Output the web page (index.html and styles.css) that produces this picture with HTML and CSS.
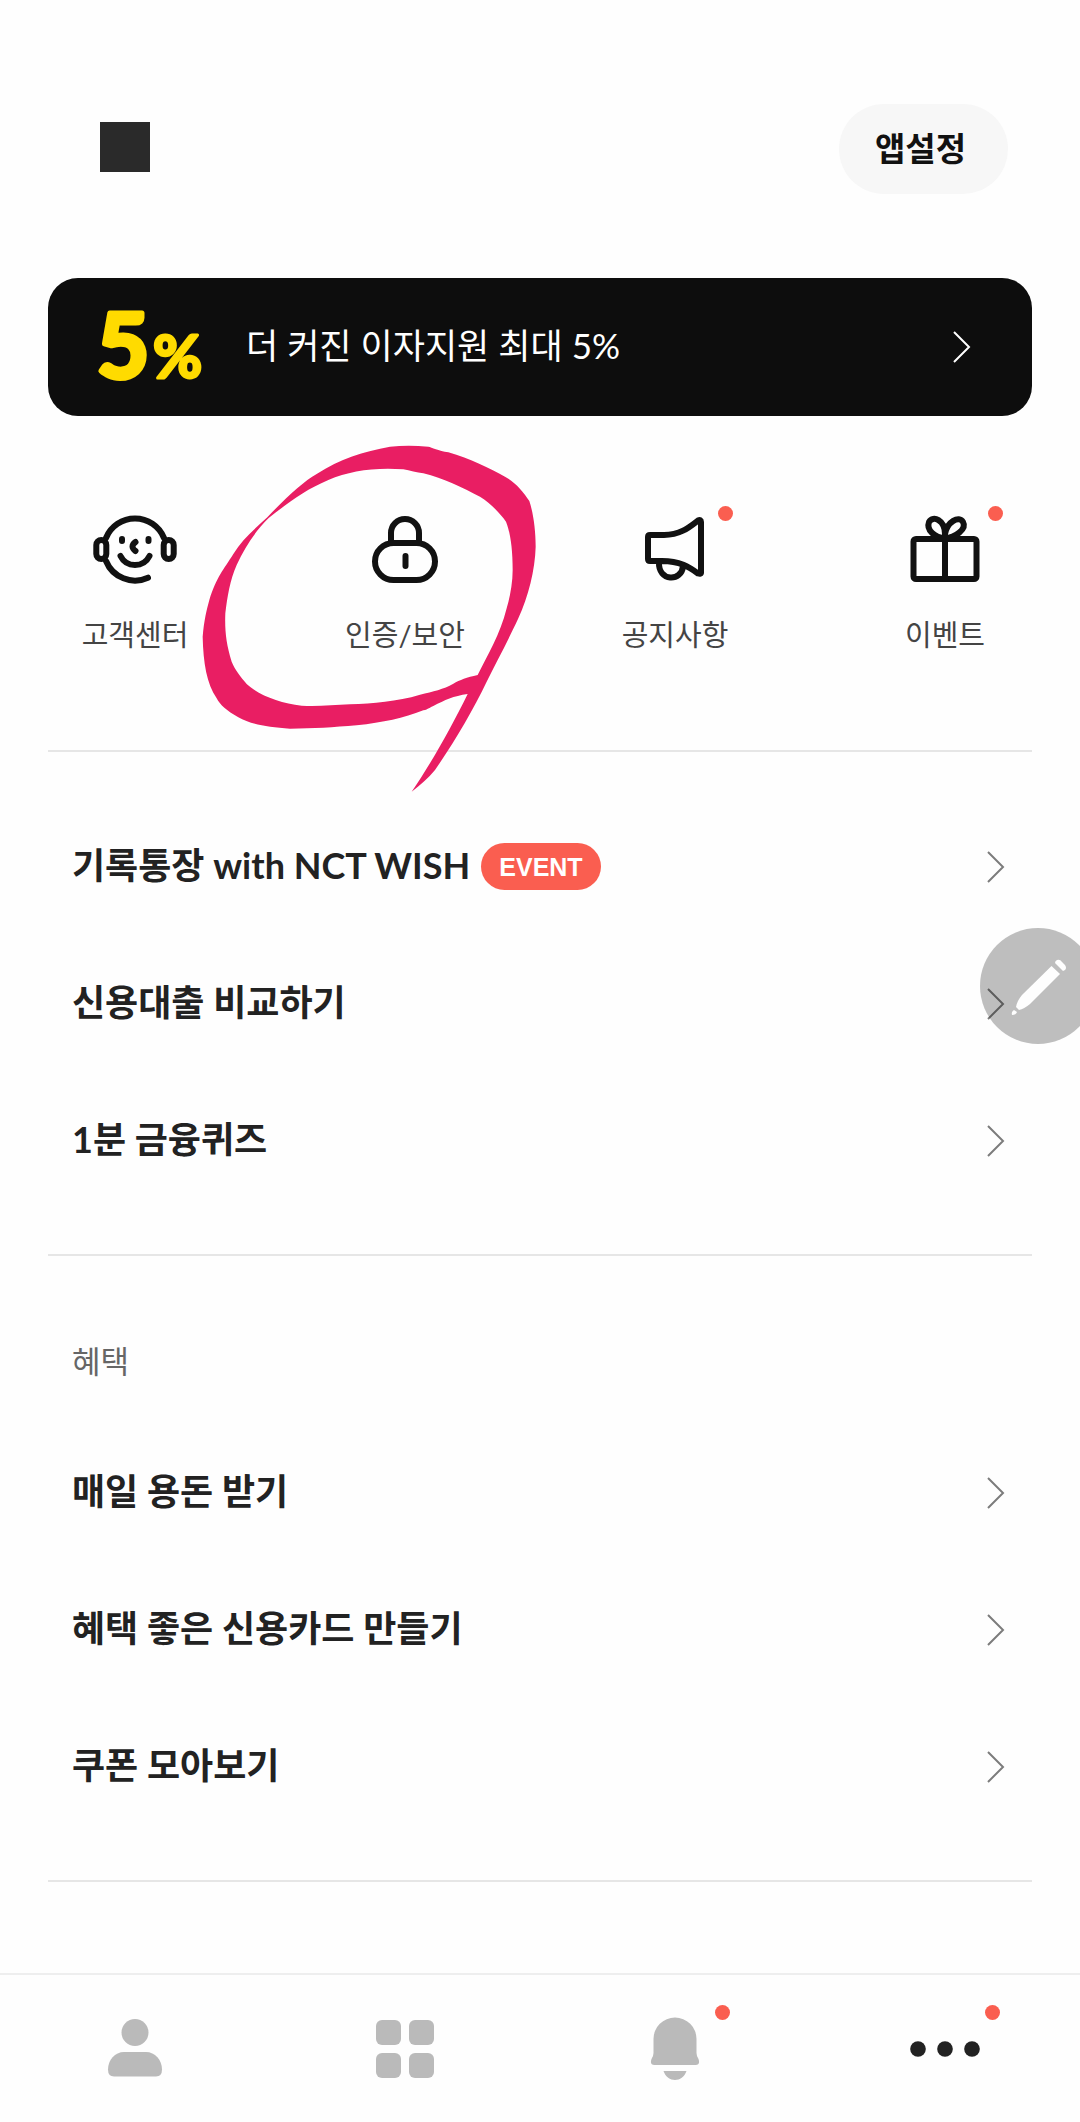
FILE: index.html
```html
<!DOCTYPE html>
<html lang="ko">
<head>
<meta charset="utf-8">
<meta name="viewport" content="width=device-width, initial-scale=1">
<title>전체</title>
<link rel="stylesheet" href="styles.css">
</head>
<body>
<svg class="defs" aria-hidden="true">
  <symbol id="chevron" viewBox="0 0 20 34"><path d="M2 2l15 15L2 32"/></symbol>
</svg>

<header class="header">
  <span class="avatar"></span>
  <button class="settings" type="button">앱설정</button>
</header>

<main>
  <a class="banner" href="#">
    <svg class="rate" viewBox="0 0 150 138"><text class="five" x="1" y="100">5</text><text class="percent" x="57" y="100">%</text></svg>
    <span class="banner-text">더 커진 이자지원 최대 5%</span>
    <svg class="chevron"><use href="#chevron"/></svg>
  </a>

  <nav class="actions">
    <a class="action" href="#">
      <span class="icon">
        <svg viewBox="0 0 90 90">
          <path d="M16 34A31.300 31.300 0 0 1 74 34M16 57A31.300 31.300 0 0 0 58 73.700"/>
          <rect x="6.300" y="36" width="10" height="19" rx="5"/>
          <rect x="73.700" y="36" width="10" height="19" rx="5"/>
          <path d="M30.500 52c6 12 23 12 29 0"/>
          <path d="M32 35v2M58.500 35v2M45.500 38c-4 3-4 6 0 9"/>
        </svg>
      </span>
      <span>고객센터</span>
    </a>
    <a class="action" href="#">
      <span class="icon">
        <svg viewBox="0 0 90 90">
          <path d="M31 37V29a14 14 0 0 1 28 0v8"/>
          <rect x="15" y="39" width="60" height="37" rx="18.500"/>
          <path d="M45.500 52v10"/>
        </svg>
      </span>
      <span>인증/보안</span>
      <svg class="scribble" viewBox="0 0 1080 1140" aria-hidden="true">
        <path fill-rule="evenodd" d="M232 262C290 200 340 155 380 132C450 85 520 66 600 50Q655 44 715 50C725 52 745 62 775 67C840 86 900 115 945 140C975 156 1000 185 1018 213C1030 250 1037 300 1037 350C1035 420 1015 500 985 565C950 640 920 695 890 755C850 840 790 940 735 1020C715 1045 690 1065 665 1085C720 1005 780 900 833 792C790 798 765 810 730 828C720 832 715 838 700 841C640 864 580 878 500 886C430 892 370 896 300 896C230 892 180 882 145 862C110 842 90 825 80 805C50 760 40 700 38 620C42 570 50 540 58 510C80 440 100 420 130 372C155 330 190 300 232 262Z M236 264C300 214 345 180 415 150C480 123 550 112 640 118C660 122 680 128 700 130C760 144 820 175 870 200C900 218 930 250 948 275C962 310 968 360 968 420C968 460 960 500 950 535C930 615 893 675 863 735C830 742 810 750 790 761C760 778 730 784 690 794C620 815 550 820 480 823C430 826 380 829 335 827C270 820 205 795 170 762C152 740 135 720 125 695C108 640 104 600 106 550C112 500 120 450 140 405C165 350 195 305 236 264Z"/>
      </svg>
    </a>
    <a class="action" href="#">
      <span class="icon">
        <svg viewBox="0 0 90 90">
          <path d="M20 31q-2 0-2 2v22q0 2 2 2h12c18 0 27 6 36 12.500q3 1 3-1V18q0-3-3-1.500c-9 7-18 14.500-34 14.500zM29 58c-1 20 23 20 24 4"/>
        </svg>
        <i class="dot"></i>
      </span>
      <span>공지사항</span>
    </a>
    <a class="action" href="#">
      <span class="icon">
        <svg viewBox="0 0 90 90">
          <rect x="13.500" y="35" width="63" height="40" rx="2.500"/>
          <path d="M45 34v41"/>
          <path d="M45 34C35 34 26 26 29 18C33 11 45 16 45 30M45 34C55 34 67 25 63 18C59 11 47 18 45 30"/>
        </svg>
        <i class="dot"></i>
      </span>
      <span>이벤트</span>
    </a>
  </nav>

  <section class="group">
    <a class="row" href="#"><span>기록통장 with NCT WISH</span><em class="badge">EVENT</em><svg class="chevron"><use href="#chevron"/></svg></a>
    <a class="row" href="#"><span>신용대출 비교하기</span><svg class="chevron"><use href="#chevron"/></svg></a>
    <a class="row" href="#"><span>1분 금융퀴즈</span><svg class="chevron"><use href="#chevron"/></svg></a>
  </section>

  <section class="group">
    <h2 class="group-title">혜택</h2>
    <a class="row" href="#"><span>매일 용돈 받기</span><svg class="chevron"><use href="#chevron"/></svg></a>
    <a class="row" href="#"><span>혜택 좋은 신용카드 만들기</span><svg class="chevron"><use href="#chevron"/></svg></a>
    <a class="row" href="#"><span>쿠폰 모아보기</span><svg class="chevron"><use href="#chevron"/></svg></a>
  </section>
</main>

<button class="pen" type="button" aria-label="메모">
  <svg viewBox="0 0 116 116">
    <path d="M71.500 38l8.500 8-30 30q-6 5-11 6l-3-3q1-6 6-12z"/>
    <path d="M77 32q3-1 5 2l3 3q2 3 0 5l-2 1-8-8q0-2 2-3z"/>
    <path d="M34 82l3 2q-1 3-5 3-1-3 2-5z"/>
  </svg>
</button>

<nav class="tabs">
  <a class="tab" href="#" aria-label="홈">
    <svg viewBox="0 0 90 90"><circle cx="45" cy="29.500" r="13.500"/><path d="M34 49h22c9 0 16 8 16 17.500q0 7-6 7H24q-6 0-6-7C18 57 25 49 34 49z"/></svg>
  </a>
  <a class="tab" href="#" aria-label="상품">
    <svg viewBox="0 0 90 90"><rect x="16" y="17" width="25" height="25" rx="6"/><rect x="49" y="17" width="25" height="25" rx="6"/><rect x="16" y="50" width="25" height="25" rx="6"/><rect x="49" y="50" width="25" height="25" rx="6"/></svg>
  </a>
  <a class="tab" href="#" aria-label="알림">
    <svg viewBox="0 0 90 90"><path d="M23.500 36a21.500 21.500 0 0 1 43 0v14q0 3 2 6 2 6-3 6h-41q-5 0-3-6 2-3 2-6zM33.500 68h23c-4 12-19 12-23 0z"/></svg>
    <i class="dot"></i>
  </a>
  <a class="tab current" href="#" aria-label="더보기" aria-current="page">
    <svg viewBox="0 0 90 90"><circle cx="18" cy="46" r="7.800"/><circle cx="45" cy="46" r="7.800"/><circle cx="72" cy="46" r="7.800"/></svg>
    <i class="dot"></i>
  </a>
</nav>
</body>
</html>
```
FILE: styles.css
```css
* { box-sizing: border-box; }

body {
  margin: 0;
  min-height: 100vh;
  display: flex;
  flex-direction: column;
  background: #fefefe;
  color: #222;
  font-family: Lato, "Noto Sans CJK KR", sans-serif;
}

a { color: inherit; text-decoration: none; }

button { border: 0; padding: 0; font: inherit; color: inherit; cursor: pointer; }

.defs { position: absolute; width: 0; height: 0; }

.header {
  display: flex;
  align-items: flex-start;
  justify-content: space-between;
  padding: 104px 72px 84px 100px;
}

.avatar { width: 50px; height: 50px; margin-top: 18px; background: #2a2a2a; }

.settings {
  height: 90px;
  padding: 0 42px 4px 36px;
  border-radius: 45px;
  background: #f7f7f7;
  color: #111;
  font-size: 33px;
  font-weight: 700;
}

.banner {
  display: flex;
  align-items: center;
  height: 138px;
  margin: 0 48px;
  padding: 0 60px 0 48px;
  border-radius: 30px;
  background: #0d0d0d;
  color: #fff;
}

.rate {
  flex: none;
  width: 150px;
  height: 138px;
  overflow: visible;
  font-family: Lato, sans-serif;
  font-weight: 700;
  fill: #ffdb00;
  stroke: #ffdb00;
  stroke-linejoin: round;
}

.five { font-size: 90px; stroke-width: 5px; }

.percent { font-size: 60px; stroke-width: 3px; }

.banner-text { padding-bottom: 4px; font-size: 35px; line-height: 48px; }

.chevron {
  flex: none;
  width: 20px;
  height: 34px;
  margin-right: 2px;
  margin-left: auto;
  fill: none;
  stroke: #7c7c7c;
  stroke-width: 2;
}

.banner .chevron { margin-right: 0; stroke: #fff; }

.actions {
  display: grid;
  grid-template-columns: repeat(4, 1fr);
  height: 334px;
  padding-top: 88px;
}

.action {
  position: relative;
  display: flex;
  flex-direction: column;
  align-items: center;
  gap: 20px;
  color: #444;
  font-size: 29px;
  line-height: 42px;
}

.icon { position: relative; width: 90px; height: 90px; }

.icon svg {
  display: block;
  fill: none;
  stroke: #111;
  stroke-width: 6;
  stroke-linecap: round;
  stroke-linejoin: round;
}

.dot {
  position: absolute;
  top: 2px;
  right: -13px;
  width: 15px;
  height: 15px;
  border-radius: 50%;
  background: #fa5e50;
}

.scribble {
  position: absolute;
  top: -74px;
  left: 50%;
  width: 360px;
  height: 380px;
  margin-left: -215px;
  fill: #e91e63;
  pointer-events: none;
}

.group {
  margin: 0 48px;
  padding: 46px 24px 45px;
  border-top: 2px solid #e6e6e6;
}

.group:last-child { border-bottom: 2px solid #e6e6e6; }

.group-title {
  margin: 0;
  height: 122px;
  color: #666;
  font-size: 31px;
  font-weight: 400;
  line-height: 118px;
}

.row {
  display: flex;
  align-items: center;
  height: 137px;
  font-size: 36px;
  font-weight: 700;
}

.row span { padding-bottom: 8px; }

.badge {
  height: 47px;
  margin-left: 11px;
  padding: 0 18px;
  border-radius: 24px;
  background: #fa5e50;
  color: #fff;
  font: 700 25px/49px "Liberation Sans", sans-serif;
}

.pen {
  position: fixed;
  top: 928px;
  right: -16px;
  width: 116px;
  height: 116px;
  border-radius: 50%;
  background: rgba(0, 0, 0, 0.25);
}

.pen svg { display: block; fill: #fefefe; }

.tabs {
  display: grid;
  grid-template-columns: repeat(4, 1fr);
  margin-top: auto;
  height: 149px;
  border-top: 2px solid #eee;
}

.tab {
  position: relative;
  display: flex;
  justify-content: center;
  padding-top: 28px;
  fill: #bababa;
}

.tab svg { width: 90px; height: 90px; }

.tab .dot { top: 30px; right: 80px; }

.current { fill: #222; }
```
